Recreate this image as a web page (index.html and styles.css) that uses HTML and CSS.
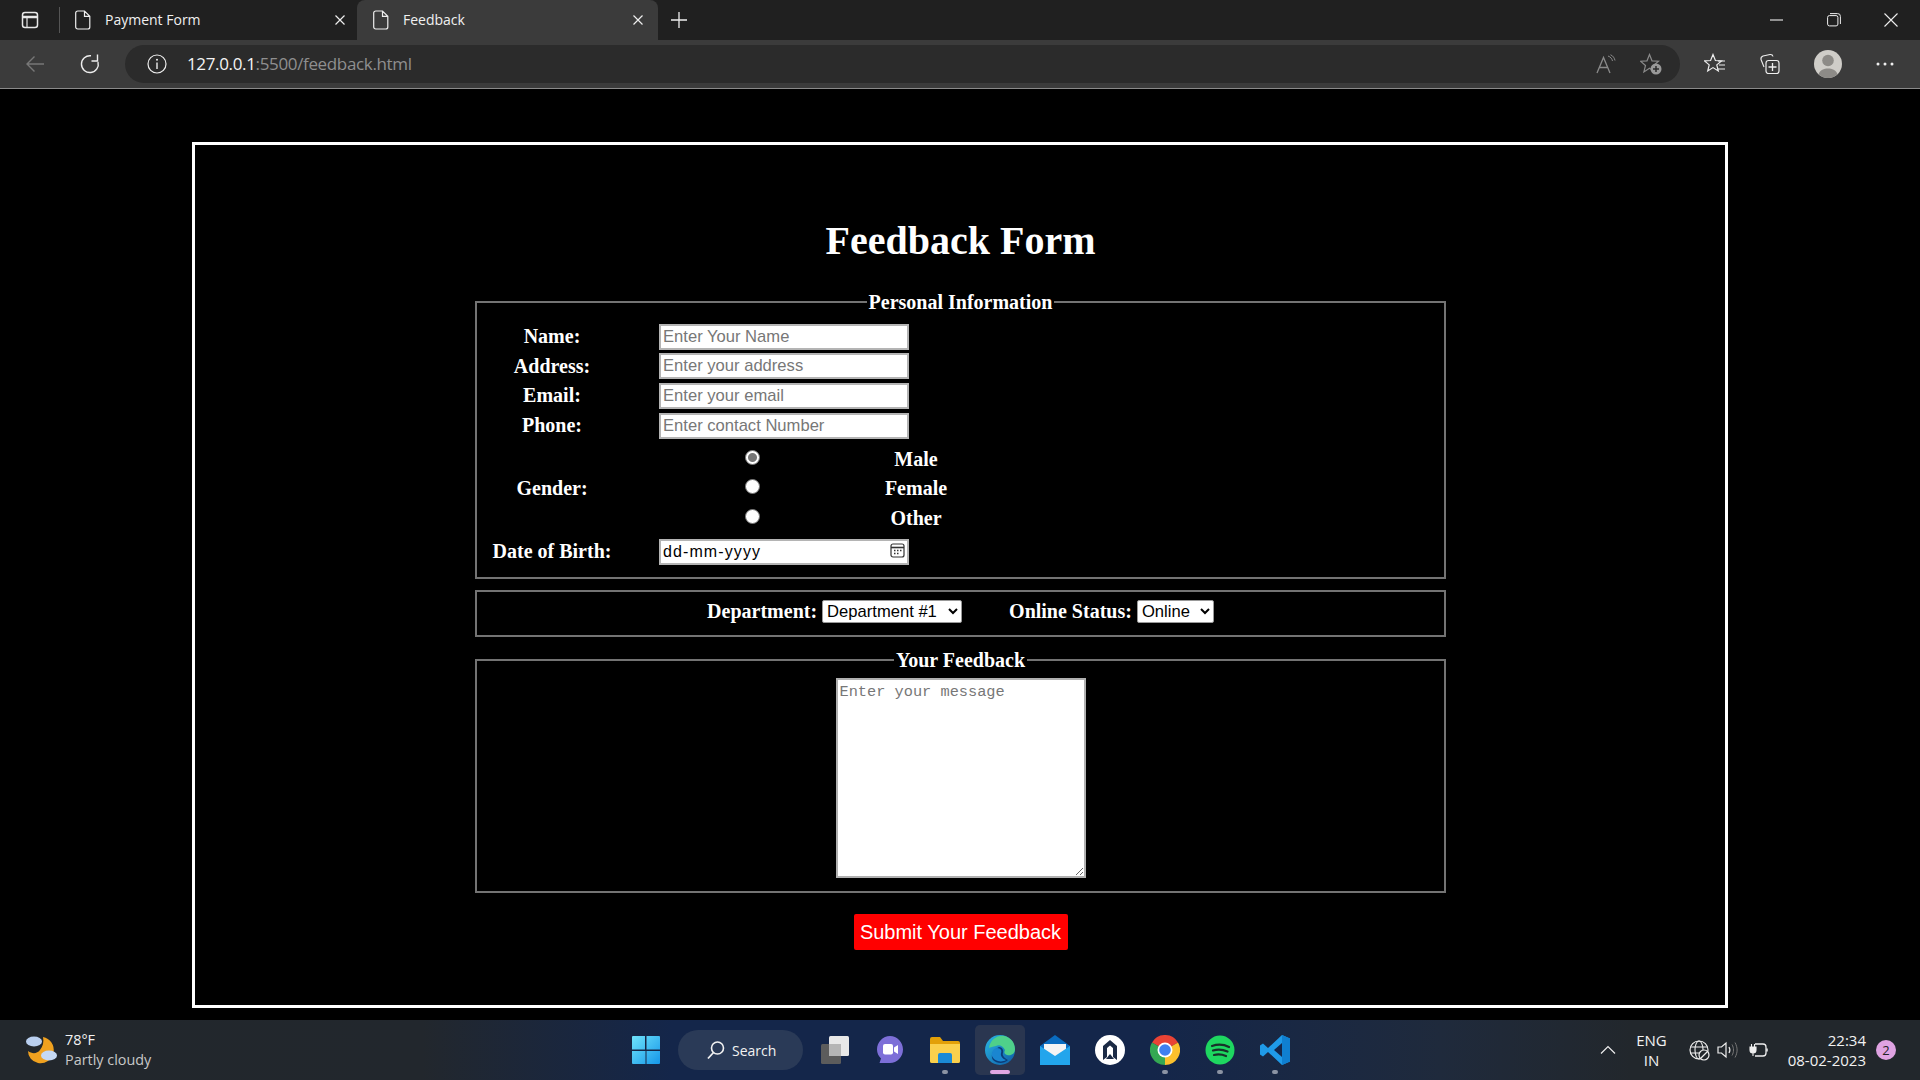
FILE: index.html
```html
<!DOCTYPE html>
<html>

<head>
    <title>Feedback</title>
    <link rel="stylesheet" href="styles.css">
</head>

<body>
    <div class="tabstrip">
        <svg class="strip-icon" width="20" height="20" viewBox="0 0 20 20"><rect x="2.500" y="2.500" width="15" height="15" rx="2.500" fill="none" stroke="#e8e8e8" stroke-width="1.500"/><path d="M2.500 7h15" stroke="#e8e8e8" stroke-width="2.500"/><path d="M7 7v10" stroke="#e8e8e8" stroke-width="1.200"/></svg>
        <span class="strip-sep"></span>
        <div class="tab">
            <svg width="16" height="20" viewBox="0 0 16 20"><path d="M2.700 1h6.800L14.800 6.300V17a2 2 0 0 1-2 2H2.700a2 2 0 0 1-2-2V3a2 2 0 0 1 2-2zM9.500 1v5.300h5.300" fill="none" stroke="#eee" stroke-width="1.200"/></svg>
            <span class="tab-title">Payment Form</span>
            <svg class="tab-x" width="12" height="12" viewBox="0 0 12 12"><path d="M1.500 1.500l9 9M10.500 1.500l-9 9" stroke="#eee" stroke-width="1.200"/></svg>
        </div>
        <div class="tab tab-active">
            <svg width="16" height="20" viewBox="0 0 16 20"><path d="M2.700 1h6.800L14.800 6.300V17a2 2 0 0 1-2 2H2.700a2 2 0 0 1-2-2V3a2 2 0 0 1 2-2zM9.500 1v5.300h5.300" fill="none" stroke="#eee" stroke-width="1.200"/></svg>
            <span class="tab-title">Feedback</span>
            <svg class="tab-x" width="12" height="12" viewBox="0 0 12 12"><path d="M1.500 1.500l9 9M10.500 1.500l-9 9" stroke="#eee" stroke-width="1.200"/></svg>
        </div>
        <svg class="new-tab" width="18" height="18" viewBox="0 0 18 18"><path d="M9 1v16M1 9h16" stroke="#eee" stroke-width="1.300"/></svg>
        <div class="win-controls">
            <svg width="14" height="14" viewBox="0 0 14 14"><path d="M0 7h13" stroke="#eee" stroke-width="1.100"/></svg>
            <svg width="14" height="14" viewBox="0 0 14 14"><rect x="0.600" y="2.600" width="10.300" height="10.300" rx="1.800" fill="none" stroke="#eee" stroke-width="1"/><path d="M3 .6h7.500a2.800 2.800 0 0 1 2.900 2.900V11" fill="none" stroke="#eee" stroke-width="1"/></svg>
            <svg width="14" height="14" viewBox="0 0 14 14"><path d="M.5.500l13 13M13.500.500l-13 13" stroke="#eee" stroke-width="1.100"/></svg>
        </div>
    </div>

    <div class="toolbar">
        <svg class="tool-back" width="20" height="20" viewBox="0 0 20 20"><path d="M19 10H2M9.500 2.500L2 10l7.500 7.500" fill="none" stroke="#777" stroke-width="1.400"/></svg>
        <svg class="tool-reload" width="22" height="22" viewBox="0 0 22 22"><path d="M12 2.800a8.400 8.400 0 1 0 7 6.200" fill="none" stroke="#eee" stroke-width="1.400"/><path d="M18.500 1.500v6.500h-6" fill="none" stroke="#eee" stroke-width="1.400"/></svg>
        <div class="address">
            <svg width="20" height="20" viewBox="0 0 20 20"><circle cx="10" cy="10" r="9" fill="none" stroke="#eee" stroke-width="1.200"/><path d="M10 8.500V15" stroke="#eee" stroke-width="1.400"/><circle cx="10" cy="5.800" r="1" fill="#eee"/></svg>
            <span class="url"><span class="url-host">127.0.0.1</span>:5500/feedback.html</span>
            <svg class="addr-read" width="20" height="20" viewBox="0 0 20 20"><path d="M1 19L7.500 3.500 14 19M3.500 13.500h8" fill="none" stroke="#8a8a8a" stroke-width="1.300"/><path d="M12 2c3 1 4 3 4.500 5M14.500 .8c2.700 1 4 3.400 4.500 5.700" fill="none" stroke="#8a8a8a" stroke-width="1"/></svg>
            <svg class="addr-star" width="22" height="22" viewBox="0 0 22 22"><path d="M9.500 1.500l2.500 6.300 6.500.4-5 4.300 1.600 6.400-5.600-3.600-5.600 3.600 1.600-6.400-5-4.300 6.500-.4z" fill="none" stroke="#8a8a8a" stroke-width="1.200"/><circle cx="16" cy="16" r="5.500" fill="#999"/><path d="M13 16h6M16 13v6" stroke="#2b2b2b" stroke-width="1.500"/></svg>
        </div>
        <svg class="tool-fav" width="22" height="22" viewBox="0 0 22 22"><path d="M9 1.500l2.400 6 6.100.4-4.700 4 1.500 6.100L9 14.600 3.700 18l1.500-6.100-4.700-4 6.100-.4z" fill="none" stroke="#eee" stroke-width="1.200"/><path d="M14 8h7M15 12h6M14 16h7" stroke="#eee" stroke-width="1.200"/></svg>
        <svg class="tool-coll" width="22" height="22" viewBox="0 0 22 22"><path d="M5 14L2 6.500Q1.500 4 4 3l7-1.500q2.500-.3 3 2" fill="none" stroke="#eee" stroke-width="1.100"/><rect x="7" y="7.500" width="13" height="13" rx="2.500" fill="none" stroke="#eee" stroke-width="1.200"/><path d="M13.500 10v8M9.500 14h8" stroke="#eee" stroke-width="1.300"/></svg>
        <svg class="tool-avatar" width="28" height="28" viewBox="0 0 28 28"><circle cx="14" cy="14" r="14" fill="#cfcdc8"/><circle cx="14" cy="10.500" r="5.800" fill="#8d8b87"/><path d="M4.500 24.300C6 20 10 18.500 14 18.500s8 1.500 9.500 5.800A14 14 0 0 1 4.500 24.300z" fill="#8d8b87"/></svg>
        <svg class="tool-more" width="18" height="4" viewBox="0 0 18 4"><circle cx="2" cy="2" r="1.500" fill="#eee"/><circle cx="9" cy="2" r="1.500" fill="#eee"/><circle cx="16" cy="2" r="1.500" fill="#eee"/></svg>
    </div>

    <div class="page">
        <form class="feedback-box">
            <h1>Feedback Form</h1>

            <fieldset class="personal">
                <legend>Personal Information</legend>
                <table>
                    <tr>
                        <td class="lbl">Name:</td>
                        <td class="field" colspan="2"><input type="text" placeholder="Enter Your Name"></td>
                    </tr>
                    <tr>
                        <td class="lbl">Address:</td>
                        <td class="field" colspan="2"><input type="text" placeholder="Enter your address"></td>
                    </tr>
                    <tr>
                        <td class="lbl">Email:</td>
                        <td class="field" colspan="2"><input type="text" placeholder="Enter your email"></td>
                    </tr>
                    <tr>
                        <td class="lbl">Phone:</td>
                        <td class="field" colspan="2"><input type="text" placeholder="Enter contact Number"></td>
                    </tr>
                    <tr class="gender-start">
                        <td class="lbl" rowspan="3">Gender:</td>
                        <td class="field radio-cell"><input type="radio" name="gender" checked></td>
                        <td class="radio-lbl">Male</td>
                    </tr>
                    <tr>
                        <td class="field radio-cell"><input type="radio" name="gender"></td>
                        <td class="radio-lbl">Female</td>
                    </tr>
                    <tr>
                        <td class="field radio-cell"><input type="radio" name="gender"></td>
                        <td class="radio-lbl">Other</td>
                    </tr>
                    <tr class="dob-row">
                        <td class="lbl">Date of Birth:</td>
                        <td class="field" colspan="2">
                            <div class="date-wrap">
                                <input class="date-text" type="text" value="dd-mm-yyyy">
                                <svg class="date-icon" width="15" height="15" viewBox="0 0 15 15"><rect x="1" y="1" width="13" height="13" rx="2" fill="none" stroke="#333" stroke-width="1.200"/><path d="M1 4.500h13" stroke="#333" stroke-width="1.600"/><path d="M4 7.500h1.500M7 7.500h1.500M10 7.500h1.500M4 10.500h1.500M7 10.500h1.500" stroke="#333" stroke-width="1.300"/></svg>
                            </div>
                        </td>
                    </tr>
                </table>
            </fieldset>

            <fieldset class="dept">
                <label>Department:</label>
                <select class="dept-select"><option>Department #1</option></select>
                <label class="status-lbl">Online Status:</label>
                <select class="status-select"><option>Online</option></select>
            </fieldset>

            <fieldset class="message">
                <legend>Your Feedback</legend>
                <textarea placeholder="Enter your message"></textarea>
            </fieldset>

            <button class="submit" type="button">Submit Your Feedback</button>
        </form>
    </div>

    <div class="taskbar">
        <div class="weather">
            <svg width="32" height="32" viewBox="0 0 32 32">
                <path d="M18 3a12.500 12.500 0 0 1-5 26A12 12 0 0 1 3 17c4 3 9 3 12-1s4-8 3-13z" fill="#f0a11f"/>
                <ellipse cx="9" cy="7.500" rx="8" ry="5" fill="#b9cff0"/>
                <ellipse cx="24" cy="21.500" rx="8" ry="5" fill="#c5d8f3"/>
            </svg>
            <div class="weather-text">
                <div class="temp">78°F</div>
                <div class="cond">Partly cloudy</div>
            </div>
        </div>

        <div class="task-icons">
            <svg class="win-logo" width="30" height="30" viewBox="0 0 30 30">
                <defs><linearGradient id="winG" x1="0" y1="0" x2="1" y2="1"><stop offset="0" stop-color="#6fe3fb"/><stop offset="1" stop-color="#1596e8"/></linearGradient></defs>
                <path d="M1 2a1 1 0 0 1 1-1h12v13.500H1zM15.500 1H28a1 1 0 0 1 1 1v12.500H15.500zM1 16h13.500v13H2a1 1 0 0 1-1-1zM15.500 16H29v12a1 1 0 0 1-1 1H15.500z" fill="url(#winG)"/>
            </svg>
            <div class="search-pill">
                <svg width="20" height="20" viewBox="0 0 20 20"><circle cx="11.500" cy="8" r="6" fill="none" stroke="#f2f2f2" stroke-width="1.600"/><path d="M7.500 12.500L2 18.500" stroke="#f2f2f2" stroke-width="1.800"/></svg>
                <span>Search</span>
            </div>
            <div class="ti-wrap">
                <svg width="30" height="30" viewBox="0 0 30 30"><rect x="9" y="1" width="20" height="20" rx="1.500" fill="#e8e8e8"/><rect x="1" y="9" width="20" height="20" rx="1.500" fill="#5c5c5c"/><rect x="9" y="9" width="12" height="12" fill="#b5b5b5"/></svg>
            </div>
            <div class="ti-wrap">
                <svg width="30" height="30" viewBox="0 0 30 30"><path d="M15 1c7 0 13 6 13 13.500S22 28 15 28H4.500l1.500-4.500C3.500 21 2 18 2 14.500 2 7 8 1 15 1z" fill="#7d6fd8"/><rect x="8" y="9" width="10" height="10.500" rx="2" fill="#fff"/><path d="M19 12.500l4-2.500v9l-4-2.500z" fill="#fff"/></svg>
            </div>
            <div class="ti-wrap">
                <svg width="30" height="30" viewBox="0 0 30 30"><path d="M0 4a2 2 0 0 1 2-2h8l3 4h15a2 2 0 0 1 2 2v18a2 2 0 0 1-2 2H2a2 2 0 0 1-2-2z" fill="#e3a008"/><path d="M0 9h30v17a2 2 0 0 1-2 2H2a2 2 0 0 1-2-2z" fill="#fbd04c"/><path d="M8 20a2 2 0 0 1 2-2h10a2 2 0 0 1 2 2v8H8z" fill="#1b8ad6"/></svg>
                <span class="run-dot"></span>
            </div>
            <div class="ti-wrap ti-active">
                <svg width="32" height="32" viewBox="0 0 32 32">
                    <defs><linearGradient id="edgeG" x1="0" y1="0" x2="1" y2="1"><stop offset="0" stop-color="#2ab7e4"/><stop offset="1" stop-color="#0d5ca6"/></linearGradient></defs>
                    <circle cx="16" cy="16" r="15" fill="url(#edgeG)"/>
                    <path d="M5 14C6 6 13 1 20 2c6 1 11 6 11 13 0 5-4 7-8 6-3-1-3-3-2-5-2-4-6-6-9-4-3 1-6 1-7 2z" fill="#4fd08a"/>
                    <path d="M15 13c3 0 5 3 4 6-1 2 1 5 5 7-4 4-11 4-15 0-2-3-2-9 6-13z" fill="#0c3c78"/>
                    <path d="M13 14c4 0 5 3 4 5-1 3 2 6 5 7-5 3-12 1-14-4-1-4 2-8 5-8z" fill="#1a86d0"/>
                </svg>
                <span class="active-bar"></span>
            </div>
            <div class="ti-wrap">
                <svg width="30" height="30" viewBox="0 0 30 30"><path d="M0 11L15 0l15 11v18H0z" fill="#0a6cc0"/><path d="M4 9h22v8l-11 6-11-6z" fill="#f4f4f4"/><path d="M0 11l15 10 15-10v19H0z" fill="#22a5ec"/></svg>
            </div>
            <div class="ti-wrap">
                <svg width="30" height="30" viewBox="0 0 30 30"><circle cx="15" cy="15" r="15" fill="#fff"/><path d="M15 5l7 6v14l-4-3v-9l-3-2.500-3 2.500v9l-4 3V11z" fill="#1b2a45"/><path d="M15 19l4 5h-8z" fill="#1b2a45"/></svg>
            </div>
            <div class="ti-wrap">
                <svg width="30" height="30" viewBox="0 0 30 30"><path d="M2 7.500A15 15 0 0 1 28 7.500L15 15z" fill="#e94335"/><path d="M28 7.500A15 15 0 0 1 15 30L15 15z" fill="#fbc02d"/><path d="M15 30A15 15 0 0 1 2 7.500L15 15z" fill="#34a853"/><circle cx="15" cy="15" r="7.500" fill="#fff"/><circle cx="15" cy="15" r="5.800" fill="#3f80f0"/></svg>
                <span class="run-dot"></span>
            </div>
            <div class="ti-wrap">
                <svg width="30" height="30" viewBox="0 0 30 30"><circle cx="15" cy="15" r="14.500" fill="#1ed760"/><path d="M7 11c6-2 12-1.500 17 1M8 15.500c5-1.500 10-1 14.500 1M9 20c4-1 8-.7 12 1" fill="none" stroke="#18312a" stroke-width="2.200" stroke-linecap="round"/></svg>
                <span class="run-dot"></span>
            </div>
            <div class="ti-wrap">
                <svg width="30" height="30" viewBox="0 0 30 30"><path d="M22 0l8 3.500v23L22 30 8 17l-5 4.500L0 19.500V10.500L3 8.500l5 4.500z" fill="#1f9ae8"/><path d="M22 8l-8 7 8 7z" fill="#14264a"/><path d="M22 0l8 3.500v23L22 30z" fill="#0f7fd0"/></svg>
                <span class="run-dot"></span>
            </div>
        </div>

        <div class="tray">
            <svg class="tray-chev" width="16" height="10" viewBox="0 0 16 10"><path d="M1 8.500L8 1.500l7 7" fill="none" stroke="#eee" stroke-width="1.200"/></svg>
            <div class="lang">ENG<br>IN</div>
            <svg class="tray-globe" width="21" height="21" viewBox="0 0 21 21"><circle cx="10" cy="10" r="9" fill="none" stroke="#eee" stroke-width="1.200"/><ellipse cx="10" cy="10" rx="4" ry="9" fill="none" stroke="#eee" stroke-width="1.100"/><path d="M1.500 7h17M1.500 13h17" stroke="#eee" stroke-width="1.100"/><circle cx="15" cy="15" r="5" fill="#22272c" stroke="#eee" stroke-width="1.200"/><path d="M12 18l6-6" stroke="#eee" stroke-width="1.200"/></svg>
            <svg class="tray-sound" width="21" height="18" viewBox="0 0 21 18"><path d="M1 6h3.500L9 2v14l-4.500-4H1z" fill="none" stroke="#eee" stroke-width="1.200"/><path d="M12 6c1.200 2 1.200 4 0 6" fill="none" stroke="#eee" stroke-width="1.200"/><path d="M15 3.500c2 3.500 2 7.500 0 11M18 1.500c2.800 5 2.800 10 0 15" fill="none" stroke="#777" stroke-width="1"/></svg>
            <svg class="tray-batt" width="20" height="18" viewBox="0 0 20 18"><path d="M6 3h8a3 3 0 0 1 3 3v6a3 3 0 0 1-3 3H6" fill="none" stroke="#eee" stroke-width="1.300"/><path d="M18 7.500v3" stroke="#eee" stroke-width="1.500"/><path d="M1 6h6v3a3 3 0 0 1-6 0zM2.500 6V3M5.500 6V3M4 12v3" fill="#eee" stroke="#eee" stroke-width="1.100"/></svg>
            <div class="clock">22:34<br>08-02-2023</div>
            <div class="badge">2</div>
        </div>
    </div>
</body>

</html>
```

FILE: styles.css
```css
html,
body {
    margin: 0;
    padding: 0;
}
body {
    width: 1920px;
    height: 1080px;
    overflow: hidden;
    background-color: black;
    display: flex;
    flex-direction: column;
}

/* browser tabs */
.tabstrip {
    height: 40px;
    background-color: #202020;
    display: flex;
    align-items: center;
    font-family: "Open Sans", sans-serif;
    font-size: 14px;
    color: #f0f0f0;
}
.strip-icon {
    margin-left: 20px;
}
.strip-sep {
    width: 1px;
    height: 26px;
    background-color: #555;
    margin-left: 19px;
    margin-right: 15px;
}
.tab {
    width: 289px;
    height: 40px;
    display: flex;
    align-items: center;
    box-sizing: border-box;
}
.tab-title {
    margin-left: 14px;
    margin-bottom: 2px;
    flex: 1;
}
.tab-x {
    margin-right: 18px;
}
.tab-active {
    width: 301px;
    margin-left: -7px;
    padding-left: 16px;
    background-color: #3b3b3b;
    border-radius: 8px 8px 0 0;
}
.tab-active .tab-x {
    margin-right: 14px;
}
.new-tab {
    margin-left: 12px;
}
.win-controls {
    margin-left: auto;
    margin-right: 22px;
    display: flex;
    gap: 43px;
}

/* address bar row */
.toolbar {
    height: 48px;
    background-color: #3b3b3b;
    border-bottom: 1px solid #8a8a8a;
    display: flex;
    align-items: center;
}
.tool-back {
    margin-left: 25px;
}
.tool-reload {
    margin-left: 34px;
}
.address {
    width: 1555px;
    height: 38px;
    margin-left: 24px;
    border-radius: 19px;
    background-color: #2b2b2b;
    display: flex;
    align-items: center;
    box-sizing: border-box;
    padding-left: 22px;
}
.url {
    margin-left: 20px;
    margin-bottom: 2px;
    font-family: "Open Sans", sans-serif;
    font-size: 17px;
    letter-spacing: -0.35px;
    color: #8f8f8f;
}
.url-host {
    color: #f4f4f4;
}
.addr-read {
    margin-left: auto;
}
.addr-star {
    margin-left: 24px;
    margin-right: 18px;
}
.tool-fav {
    margin-left: 24px;
}
.tool-coll {
    margin-left: 33px;
}
.tool-avatar {
    margin-left: 33px;
}
.tool-more {
    margin-left: 34px;
}

/* the page itself */
.page {
    flex: 1;
    background-color: black;
    padding-top: 53px;
}
.feedback-box {
    width: 1536px;
    height: 866px;
    margin: 0 auto;
    box-sizing: border-box;
    border: 3px solid white;
    padding: 0 279px 0 280px;
    color: white;
    font-family: "Liberation Serif", serif;
    font-weight: bold;
    font-size: 20px;
    text-align: center;
}
h1 {
    font-size: 40px;
    margin: 73px 0 27px 0;
    line-height: 46px;
}
fieldset {
    margin: 0;
    padding: 0;
    border: 2px solid #737373;
    min-width: 0;
}
legend {
    margin: 0 auto;
    padding: 0 2px;
    line-height: 22px;
}

.personal {
    height: 288px;
    box-sizing: border-box;
    text-align: left;
}
table {
    border-collapse: collapse;
    margin-left: 13px;
    margin-top: 9px;
}
td {
    padding: 0;
    height: 29.6px;
}
.lbl {
    width: 124px;
    text-align: center;
}
.field {
    padding-left: 45px;
}
.radio-cell {
    width: 186px;
    text-align: center;
}
.radio-lbl {
    width: 142px;
    text-align: center;
}
input[type=text] {
    display: block;
    width: 250px;
    height: 26px;
    box-sizing: border-box;
    padding: 1px 2px;
    border: 2px solid #b4b4b4;
    background: white;
    font-family: "Liberation Sans", sans-serif;
    font-size: 16.600px;
    color: black;
    outline: none;
}
input::placeholder,
textarea::placeholder {
    color: #777;
}
input[type=radio] {
    appearance: none;
    display: block;
    width: 15px;
    height: 15px;
    margin: 0 auto 4px auto;
    border-radius: 50%;
    background: white;
    border: 1px solid #777;
    box-sizing: border-box;
}
input[type=radio]:checked {
    background: radial-gradient(circle, #767676 0, #767676 4px, white 5px);
}
.gender-start td {
    padding-top: 4px;
}
.dob-row td {
    padding-top: 4px;
}
.date-wrap {
    position: relative;
    width: 250px;
}
input.date-text {
    font-size: 16px;
    letter-spacing: 1.100px;
}
.date-icon {
    position: absolute;
    right: 4px;
    top: 4px;
}

.dept {
    height: 47px;
    box-sizing: border-box;
    margin-top: 11px;
    padding-top: 8px;
    line-height: 22px;
}
.dept select {
    height: 23px;
    background: white;
    color: black;
    border: 1px solid #999;
    border-radius: 2px;
    font-family: "Liberation Sans", sans-serif;
    font-size: 16.600px;
    vertical-align: top;
}
.dept-select {
    width: 140px;
}
.status-select {
    width: 77px;
}
.status-lbl {
    margin-left: 42px;
}

.message {
    height: 244px;
    box-sizing: border-box;
    margin-top: 12px;
    padding-top: 7px;
}
textarea {
    display: block;
    width: 250px;
    height: 200px;
    box-sizing: border-box;
    margin: 0 auto;
    padding: 3px 2px;
    border: 2px solid #b0b0b0;
    background: white;
    font-family: "Liberation Mono", monospace;
    font-size: 15.300px;
    outline: none;
}

.submit {
    display: block;
    width: 214px;
    height: 36px;
    margin: 21px auto 0 auto;
    padding: 0;
    border: none;
    border-radius: 2px;
    background-color: #ff0000;
    color: white;
    font-family: "Liberation Sans", sans-serif;
    font-size: 20px;
}

/* windows taskbar */
.taskbar {
    height: 60px;
    background: linear-gradient(90deg, #22272c 0, #22272d 22%, #14264a 35%, #14264a 60%, #1f2a3c 75%, #22272c 85%);
    display: flex;
    align-items: center;
    position: relative;
    font-family: "Open Sans", sans-serif;
    color: #f2f2f2;
}
.weather {
    display: flex;
    align-items: center;
    margin-left: 25px;
    width: 606px;
}
.weather-text {
    margin-left: 8px;
    font-size: 14.400px;
    line-height: 20px;
}
.cond {
    color: #c8c8c8;
}
.task-icons {
    display: flex;
    align-items: center;
}
.win-logo {
    margin-right: 17px;
}
.search-pill {
    width: 125px;
    height: 40px;
    box-sizing: border-box;
    border-radius: 20px;
    background-color: #2a3a57;
    display: flex;
    align-items: center;
    padding-left: 28px;
    font-size: 14px;
    gap: 6px;
    margin-right: 7px;
}
.ti-wrap {
    width: 50px;
    height: 50px;
    margin-right: 5px;
    border-radius: 5px;
    display: flex;
    align-items: center;
    justify-content: center;
    position: relative;
}
.ti-active {
    background-color: #2a3650;
}
.run-dot {
    position: absolute;
    bottom: 1px;
    width: 6px;
    height: 4px;
    border-radius: 2px;
    background-color: #8b93a3;
}
.active-bar {
    position: absolute;
    bottom: 1px;
    width: 20px;
    height: 4px;
    border-radius: 2px;
    background-color: #e0a6e4;
}
.tray {
    position: absolute;
    right: 0;
    top: 0;
    height: 60px;
    display: flex;
    align-items: center;
}
.tray-chev {
    margin-right: 20px;
}
.lang {
    text-align: center;
    font-size: 15px;
    line-height: 20px;
    margin-right: 22px;
}
.tray-sound {
    margin-left: 7px;
}
.tray-batt {
    margin-left: 11px;
}
.clock {
    text-align: right;
    font-size: 15px;
    line-height: 20px;
    margin-left: 19px;
}
.badge {
    width: 20px;
    height: 20px;
    border-radius: 50%;
    background-color: #dfa3e2;
    color: #222;
    font-size: 13px;
    line-height: 20px;
    text-align: center;
    margin-left: 10px;
    margin-right: 24px;
}
```
